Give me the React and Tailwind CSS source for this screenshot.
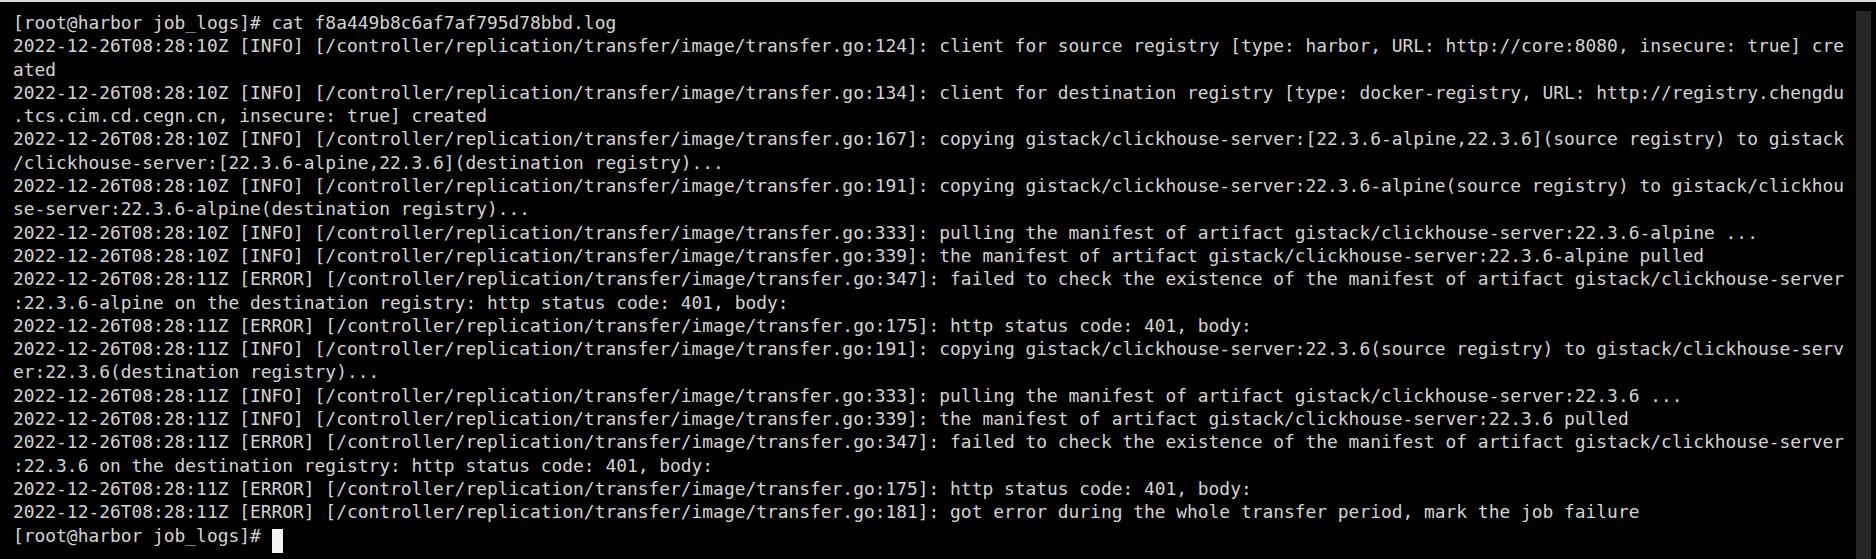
const LINES = [
  "[root@harbor job_logs]# cat f8a449b8c6af7af795d78bbd.log",
  "2022-12-26T08:28:10Z [INFO] [/controller/replication/transfer/image/transfer.go:124]: client for source registry [type: harbor, URL: http://core:8080, insecure: true] cre",
  "ated",
  "2022-12-26T08:28:10Z [INFO] [/controller/replication/transfer/image/transfer.go:134]: client for destination registry [type: docker-registry, URL: http://registry.chengdu",
  ".tcs.cim.cd.cegn.cn, insecure: true] created",
  "2022-12-26T08:28:10Z [INFO] [/controller/replication/transfer/image/transfer.go:167]: copying gistack/clickhouse-server:[22.3.6-alpine,22.3.6](source registry) to gistack",
  "/clickhouse-server:[22.3.6-alpine,22.3.6](destination registry)...",
  "2022-12-26T08:28:10Z [INFO] [/controller/replication/transfer/image/transfer.go:191]: copying gistack/clickhouse-server:22.3.6-alpine(source registry) to gistack/clickhou",
  "se-server:22.3.6-alpine(destination registry)...",
  "2022-12-26T08:28:10Z [INFO] [/controller/replication/transfer/image/transfer.go:333]: pulling the manifest of artifact gistack/clickhouse-server:22.3.6-alpine ...",
  "2022-12-26T08:28:10Z [INFO] [/controller/replication/transfer/image/transfer.go:339]: the manifest of artifact gistack/clickhouse-server:22.3.6-alpine pulled",
  "2022-12-26T08:28:11Z [ERROR] [/controller/replication/transfer/image/transfer.go:347]: failed to check the existence of the manifest of artifact gistack/clickhouse-server",
  ":22.3.6-alpine on the destination registry: http status code: 401, body:",
  "2022-12-26T08:28:11Z [ERROR] [/controller/replication/transfer/image/transfer.go:175]: http status code: 401, body:",
  "2022-12-26T08:28:11Z [INFO] [/controller/replication/transfer/image/transfer.go:191]: copying gistack/clickhouse-server:22.3.6(source registry) to gistack/clickhouse-serv",
  "er:22.3.6(destination registry)...",
  "2022-12-26T08:28:11Z [INFO] [/controller/replication/transfer/image/transfer.go:333]: pulling the manifest of artifact gistack/clickhouse-server:22.3.6 ...",
  "2022-12-26T08:28:11Z [INFO] [/controller/replication/transfer/image/transfer.go:339]: the manifest of artifact gistack/clickhouse-server:22.3.6 pulled",
  "2022-12-26T08:28:11Z [ERROR] [/controller/replication/transfer/image/transfer.go:347]: failed to check the existence of the manifest of artifact gistack/clickhouse-server",
  ":22.3.6 on the destination registry: http status code: 401, body:",
  "2022-12-26T08:28:11Z [ERROR] [/controller/replication/transfer/image/transfer.go:175]: http status code: 401, body:",
  "2022-12-26T08:28:11Z [ERROR] [/controller/replication/transfer/image/transfer.go:181]: got error during the whole transfer period, mark the job failure",
];

export default function App() {
  return (
    <div className="w-[1876px] h-[559px] bg-black border-t-2 border-[#d9d9d9] flex overflow-hidden">
      {/* Terminal output */}
      <div className="flex-1 pl-[13px] pt-[9px] font-['DejaVu_Sans_Mono',monospace] text-[17.9px] leading-[23.3px] text-[#d4d4d4]">
        {LINES.map((line, i) => (
          <div key={i} className="whitespace-pre h-[23.3px]">
            {line}
          </div>
        ))}
        <div className="whitespace-pre h-[23.3px] flex items-start">
          <span>[root@harbor job_logs]# </span>
          <span className="inline-block w-[11px] h-[24px] mt-[5px] bg-[#f2f2f2]" />
        </div>
      </div>

      {/* Scrollbar */}
      <div className="w-[15px] mt-[9px] mr-[5px] bg-[#262626]" />
    </div>
  );
}
